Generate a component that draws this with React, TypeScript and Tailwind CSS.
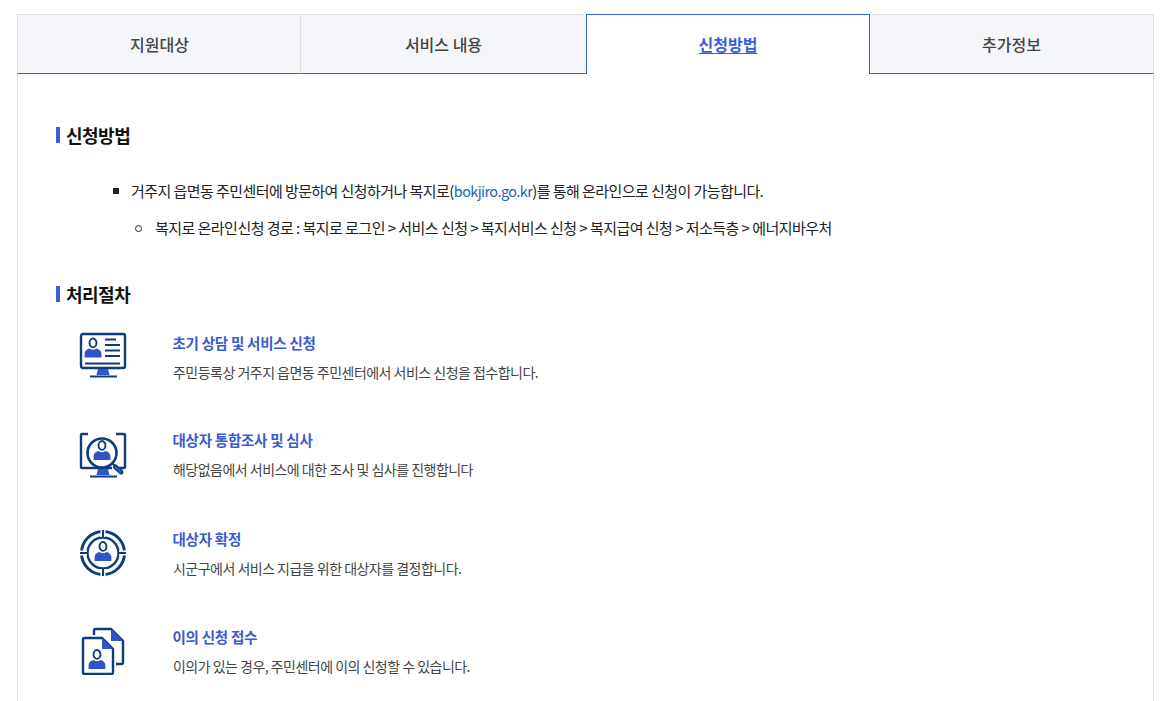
import React from "react";

const NAVY = "#0f3d7c";
const BLUE = "#2f55c8";

function Person({ cx, top, s = 1 }: { cx: number; top: number; s?: number }) {
  return (
    <g transform={`translate(${cx} ${top}) scale(${s})`}>
      <ellipse cx="0" cy="4.2" rx="3.300" ry="4.200" fill="none" stroke={NAVY} strokeWidth="1.800" />
      <path d="M-8 18v-3.500c0-3 2.500-4.500 5-5 1.500 1.500 4.500 1.500 6 0 2.500.5 5 2 5 5V18z" fill={BLUE} />
    </g>
  );
}

function Stand() {
  return (
    <>
      <path d="M19 38h10l1.500 6h-13z" fill={BLUE} />
      <path d="M11 45.500h27" stroke={NAVY} strokeWidth="2" />
    </>
  );
}

function IconMonitor() {
  return (
    <svg width="48" height="48" viewBox="0 0 48 48" fill="none">
      <rect x="2" y="3" width="44" height="34" rx="2" stroke={NAVY} strokeWidth="2.400" />
      <Person cx={14} top={7.500} s={1.050} />
      <path d="M26 8.500h11M26 14h15M26 19.500h15M26 25h15M6 32.500h35" stroke={NAVY} strokeWidth="2" />
      <Stand />
    </svg>
  );
}

function IconSearch() {
  return (
    <svg width="48" height="48" viewBox="0 0 48 48" fill="none">
      <path d="M9 3H3a1 1 0 0 0-1 1v32a1 1 0 0 0 1 1h30M37 3h8a1 1 0 0 1 1 1v32a1 1 0 0 1-1 1h-5" stroke={NAVY} strokeWidth="2.400" />
      <circle cx="23" cy="22" r="14.500" fill="#fff" stroke={NAVY} strokeWidth="2.600" />
      <Person cx={23} top={10} s={1.050} />
      <path d="M33.500 32.500l3 3" stroke={NAVY} strokeWidth="2" />
      <path d="M36.500 36l5.500 5" stroke={NAVY} strokeWidth="5" strokeLinecap="round" />
      <path d="M37 36.500l4.500 4" stroke={BLUE} strokeWidth="2.400" strokeLinecap="round" />
      <Stand />
    </svg>
  );
}

function IconTarget() {
  return (
    <svg width="48" height="48" viewBox="0 0 48 48" fill="none">
      <circle cx="24" cy="24" r="15.500" stroke={NAVY} strokeWidth="2.400" />
      <circle cx="24" cy="24" r="21.500" stroke={NAVY} strokeWidth="3" />
      <path d="M24 0v8M24 40v8M0 24h8M40 24h8" stroke="#fff" strokeWidth="5" />
      <path d="M24 1v8M24 39v8M1 24h8M39 24h8" stroke={NAVY} strokeWidth="2" />
      <Person cx={24} top={13} s={1.050} />
    </svg>
  );
}

function IconDocs() {
  return (
    <svg width="48" height="48" viewBox="0 0 48 48" fill="none">
      <path d="M15 8V3.500A1.500 1.500 0 0 1 16.500 2H32l12 12v21.500a1.500 1.500 0 0 1-1.500 1.500H37" stroke={NAVY} strokeWidth="2.400" />
      <path d="M32 2l12 12H32z" fill={BLUE} />
      <path d="M23 11H5.500A1.500 1.500 0 0 0 4 12.500v33A1.500 1.500 0 0 0 5.500 47h27a1.500 1.500 0 0 0 1.500-1.500V22z" stroke={NAVY} strokeWidth="2.400" />
      <path d="M23 11l11 11H23z" fill={BLUE} />
      <Person cx={18} top={23} s={1.050} />
    </svg>
  );
}

const steps = [
  { row: "h-[97px]", pad: "pt-[1px]", icon: <IconMonitor />, title: "초기 상담 및 서비스 신청", desc: "주민등록상 거주지 읍면동 주민센터에서 서비스 신청을 접수합니다." },
  { row: "h-[99px]", pad: "pt-[4px]", icon: <IconSearch />, title: "대상자 통합조사 및 심사", desc: "해당없음에서 서비스에 대한 조사 및 심사를 진행합니다" },
  { row: "h-[98px]", pad: "pt-[3px]", icon: <IconTarget />, title: "대상자 확정", desc: "시군구에서 서비스 지급을 위한 대상자를 결정합니다." },
  { row: "h-[74px]", pad: "pt-[3px]", icon: <IconDocs />, title: "이의 신청 접수", desc: "이의가 있는 경우, 주민센터에 이의 신청할 수 있습니다." },
];

function Heading({ children }: { children: React.ReactNode }) {
  return (
    <h3 className="flex h-[24px] items-center gap-[6px] text-[18px] font-bold leading-[24px] tracking-[-0.5px] text-[#111]">
      <span className="h-[16px] w-[4px] bg-[#3b5fd9]" />
      {children}
    </h3>
  );
}

export default function App() {
  return (
    <div
      className="h-[701px] overflow-hidden bg-white pl-[17px] pr-[10px] pt-[14px]"
      style={{ fontFamily: '"Noto Sans CJK KR", "Noto Sans", sans-serif' }}
    >
      <nav className="grid h-[60px] grid-cols-[283px_286px_284px_284px] text-[16px] font-medium text-[#444]">
        <div className="flex items-center justify-center border border-r-0 border-[#e0e0e0] border-b-[#3b5fd9] bg-[#f5f6fa] pl-[1px]">지원대상</div>
        <div className="flex items-center justify-center border-t border-l border-[#e0e0e0] border-b border-b-[#3b5fd9] bg-[#f5f6fa]">서비스 내용</div>
        <div className="flex items-center justify-center border border-b-0 border-[#3b5fd9] bg-white pb-[1px] font-bold text-[#3b5fd9] underline underline-offset-2">신청방법</div>
        <div className="flex items-center justify-center border-t border-r border-[#e0e0e0] border-b border-b-[#3b5fd9] bg-[#f5f6fa]">추가정보</div>
      </nav>
      <main className="h-[640px] w-[1137px] border-x border-[#e0e0e0] pl-[38px] pt-[49px]">
        <Heading>신청방법</Heading>
        <ul className="mt-[32px] pl-[57px] text-[15px] leading-[24px] tracking-[-0.57px] text-[#222]">
          <li className="flex items-center gap-[12px]">
            <span className="h-[6px] w-[6px] bg-[#222]" />
            <span>
              거주지 읍면동 주민센터에 방문하여 신청하거나 복지로(<span className="text-[14.500px] text-[#1d62b8]">bokjiro.go.kr</span>)를 통해 온라인으로 신청이 가능합니다.
            </span>
          </li>
          <li className="mt-[13px] flex items-center gap-[13px] pl-[22px] tracking-[-0.54px]">
            <span className="h-[7px] w-[7px] rounded-full border border-[#222]" />
            <span>복지로 온라인신청 경로 : 복지로 로그인 &gt; 서비스 신청 &gt; 복지서비스 신청 &gt; 복지급여 신청 &gt; 저소득층 &gt; 에너지바우처</span>
          </li>
        </ul>
        <div className="mt-[42px]">
          <Heading>처리절차</Heading>
        </div>
        <ol className="mt-[25px] flex flex-col">
          {steps.map((s) => (
            <li key={s.title} className={`flex pl-[23px] ${s.row}`}>
              <div className={`-mt-[1px] w-[93.500px] shrink-0 ${s.pad}`}>{s.icon}</div>
              <div>
                <p className="text-[14.500px] font-bold leading-[24px] tracking-[-0.25px] text-[#3b5bd0]">{s.title}</p>
                <p className="mt-[5px] pl-[0.5px] text-[14px] leading-[24px] tracking-[-0.52px] text-[#444]">{s.desc}</p>
              </div>
            </li>
          ))}
        </ol>
      </main>
    </div>
  );
}
